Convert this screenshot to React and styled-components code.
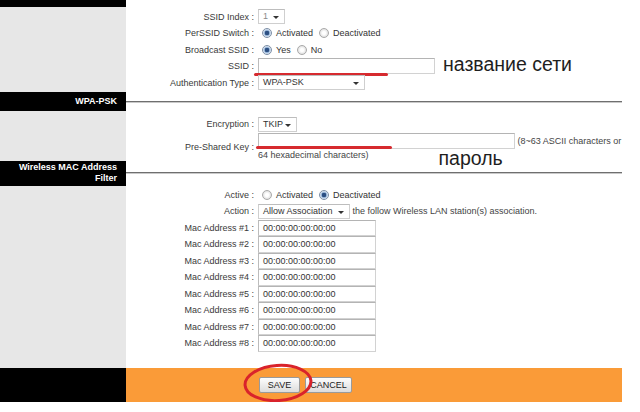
import styled, { createGlobalStyle } from "styled-components";

const GlobalStyle = createGlobalStyle`
  html, body {
    margin: 0;
    padding: 0;
    background: #fff;
  }
  body {
    font-family: "Liberation Sans", Arial, sans-serif;
    font-size: 9px;
    color: #333;
  }
`;

const Radio = ({ checked, children }) => <RadioWrap>
    <RadioDot checked={checked} />
    <RadioText>{children}</RadioText>
</RadioWrap>;

const Select = ({ width, muted, children }) => <SelectBox width={width} muted={muted}>
    {children}
    <Arrow />
</SelectBox>;

const macs = [1, 2, 3, 4, 5, 6, 7, 8];

const App = () => <>
    <GlobalStyle />
    <Page>
        <Section>
            <Side top />
            <Main pad="8.5px 0 1px">
                <Row>
                    <Label>SSID Index :</Label>
                    <Field><Select width={27} muted>1</Select></Field>
                </Row>
                <Row>
                    <Label>PerSSID Switch :</Label>
                    <Field>
                        <Radio checked>Activated</Radio>
                        <Radio>Deactivated</Radio>
                    </Field>
                </Row>
                <Row>
                    <Label>Broadcast SSID :</Label>
                    <Field>
                        <Radio checked>Yes</Radio>
                        <Radio>No</Radio>
                    </Field>
                </Row>
                <Row>
                    <Label>SSID :</Label>
                    <Field>
                        <TextInput width={177} height={16} />
                        <Note size={19.5} gap={8}>название сети</Note>
                        <RedLine top={15} left={-4} width={134} />
                    </Field>
                </Row>
                <Row>
                    <Label>Authentication Type :</Label>
                    <Field><Select width={107}>WPA-PSK</Select></Field>
                </Row>
            </Main>
        </Section>

        <HeaderSection height={19}>
            <SideTitle>WPA-PSK</SideTitle>
            <RuleCell><Rule /></RuleCell>
        </HeaderSection>

        <Section>
            <Side />
            <Main pad="5px 0 0">
                <Row>
                    <Label>Encryption :</Label>
                    <Field><Select width={39}>TKIP</Select></Field>
                </Row>
                <TallRow>
                    <Label>Pre-Shared Key :</Label>
                    <WrapField>
                        <TextInput width={257} height={16} inline />
                        <Hint> (8~63 ASCII characters or</Hint>
                        <br />
                        <Hint>64 hexadecimal characters)</Hint>
                        <LowNote>пароль</LowNote>
                        <RedLine top={13} left={-2} width={136} />
                    </WrapField>
                </TallRow>
            </Main>
        </Section>

        <HeaderSection height={25}>
            <SideTitle>Wireless MAC Address<br />Filter</SideTitle>
            <RuleCell><Rule /></RuleCell>
        </HeaderSection>

        <Section>
            <Side />
            <Main pad="1px 0 16px">
                <Row>
                    <Label>Active :</Label>
                    <Field>
                        <Radio>Activated</Radio>
                        <Radio checked>Deactivated</Radio>
                    </Field>
                </Row>
                <Row>
                    <Label>Action :</Label>
                    <Field>
                        <Select width={92}>Allow Association</Select>
                        <Hint>&nbsp;the follow Wireless LAN station(s) association.</Hint>
                    </Field>
                </Row>
                {macs.map((n) => (
                    <Row key={n}>
                        <Label>Mac Address #{n} :</Label>
                        <Field>
                            <TextInput width={118} height={16.5}>00:00:00:00:00:00</TextInput>
                        </Field>
                    </Row>
                ))}
            </Main>
        </Section>

        <Footer>
            <FooterSide />
            <FooterBar>
                <Button width={41}>SAVE</Button>
                <Button width={47}>CANCEL</Button>
                <Circle width="72" height="42" viewBox="0 0 72 42">
                    <ellipse cx="36" cy="21" rx="33" ry="17.5" fill="none" stroke="#d9232b" strokeWidth="3" transform="rotate(-4 36 21)" />
                </Circle>
            </FooterBar>
        </Footer>
    </Page>
</>;

const Page = styled.div`
    width: 622px;
    display: flex;
    flex-direction: column;
`;

const Section = styled.div`
    display: grid;
    grid-template-columns: 126px 496px;
`;

const Side = styled.div`
    background: #e7e7e7;
    border-top: ${(p) => (p.top ? "7px solid #000" : "none")};
`;

const Main = styled.div`
    padding: ${(p) => p.pad};
    display: flex;
    flex-direction: column;
`;

const Row = styled.div`
    display: grid;
    grid-template-columns: 132px 1fr;
    align-items: center;
    height: 16.5px;
`;

const TallRow = styled(Row)`
    height: 28px;
    align-items: center;
`;

const Label = styled.div`
    text-align: right;
    padding-right: 4px;
    color: #3a3a3a;
    white-space: nowrap;
`;

const Field = styled.div`
    position: relative;
    display: flex;
    align-items: center;
    height: 100%;
    white-space: nowrap;
`;

const WrapField = styled.div`
    position: relative;
    line-height: 11px;
    white-space: nowrap;
    align-self: start;
`;

const TextInput = styled.div`
    box-sizing: border-box;
    display: ${(p) => (p.inline ? "inline-block" : "block")};
    vertical-align: middle;
    width: ${(p) => p.width}px;
    height: ${(p) => p.height}px;
    line-height: ${(p) => p.height - 2}px;
    padding-left: 4px;
    background: #fff;
    border: 1px solid #d2d2d2;
    border-top-color: #b4b4b4;
    border-left-color: #bcbcbc;
    color: #333;
    margin-bottom: ${(p) => (p.inline ? "1px" : "0")};
`;

const Hint = styled.span`
    color: #444;
`;

const Note = styled.span`
    font-size: ${(p) => p.size}px;
    line-height: 16px;
    margin-left: ${(p) => p.gap}px;
    color: #1e1e1e;
    transform: translateY(-2px);
`;

const LowNote = styled.span`
    position: relative;
    top: 7px;
    margin-left: 70px;
    font-size: 19.5px;
    line-height: 0;
    color: #1e1e1e;
`;

const RedLine = styled.div`
    position: absolute;
    top: ${(p) => p.top}px;
    left: ${(p) => p.left}px;
    width: ${(p) => p.width}px;
    height: 3px;
    border-radius: 2px;
    background: #d62a2f;
`;

const RadioWrap = styled.span`
    display: inline-flex;
    align-items: center;
    margin-left: 4px;
    margin-right: 2px;
`;

const RadioDot = styled.span`
    box-sizing: border-box;
    width: 10px;
    height: 10px;
    border-radius: 50%;
    border: 1px solid ${(p) => (p.checked ? "#7d8fa6" : "#a9a9a9")};
    background: ${(p) => (p.checked
        ? "radial-gradient(circle, #2c4f82 0 2px, #8fb0d6 2.5px, #e8eef6 4px)"
        : "radial-gradient(circle, #fff 0 1.5px, #dcdcdc 4.5px)")};
`;

const RadioText = styled.span`
    margin-left: 4px;
    color: #333;
`;

const SelectBox = styled.div`
    position: relative;
    box-sizing: border-box;
    width: ${(p) => p.width}px;
    height: 15px;
    line-height: 13px;
    padding-left: 4px;
    background: #fff;
    border: 1px solid #cfcfcf;
    border-top-color: #bdbdbd;
    color: ${(p) => (p.muted ? "#8a8a8a" : "#333")};
`;

const Arrow = styled.span`
    position: absolute;
    right: 5px;
    top: 6px;
    width: 0;
    height: 0;
    border-left: 3px solid transparent;
    border-right: 3px solid transparent;
    border-top: 3px solid #333;
`;

const HeaderSection = styled.div`
    display: grid;
    grid-template-columns: 126px 496px;
    height: ${(p) => p.height}px;
`;

const SideTitle = styled.div`
    background: #000;
    color: #fff;
    font-weight: bold;
    font-size: 9px;
    line-height: 11px;
    text-align: right;
    padding-right: 9px;
    display: flex;
    align-items: center;
    justify-content: flex-end;
`;

const RuleCell = styled.div`
    display: flex;
    align-items: center;
`;

const Rule = styled.div`
    width: 100%;
    height: 1px;
    background: #6f6f6f;
    border-bottom: 1px solid #c9c9c9;
`;

const Footer = styled.div`
    display: grid;
    grid-template-columns: 126px 496px;
    height: 34px;
`;

const FooterSide = styled.div`
    background: #000;
`;

const FooterBar = styled.div`
    position: relative;
    background: #fa9b38;
    display: flex;
    align-items: center;
    gap: 5px;
    padding-left: 133px;
`;

const Button = styled.div`
    box-sizing: border-box;
    width: ${(p) => p.width}px;
    height: 16px;
    line-height: 14px;
    text-align: center;
    font-size: 9px;
    color: #222;
    background: linear-gradient(#fdfdfd, #dcdcdc);
    border: 1px solid #9a9a9a;
    border-radius: 2px;
`;

const Circle = styled.svg`
    position: absolute;
    left: 116px;
    top: -6px;
`;

export default App;
